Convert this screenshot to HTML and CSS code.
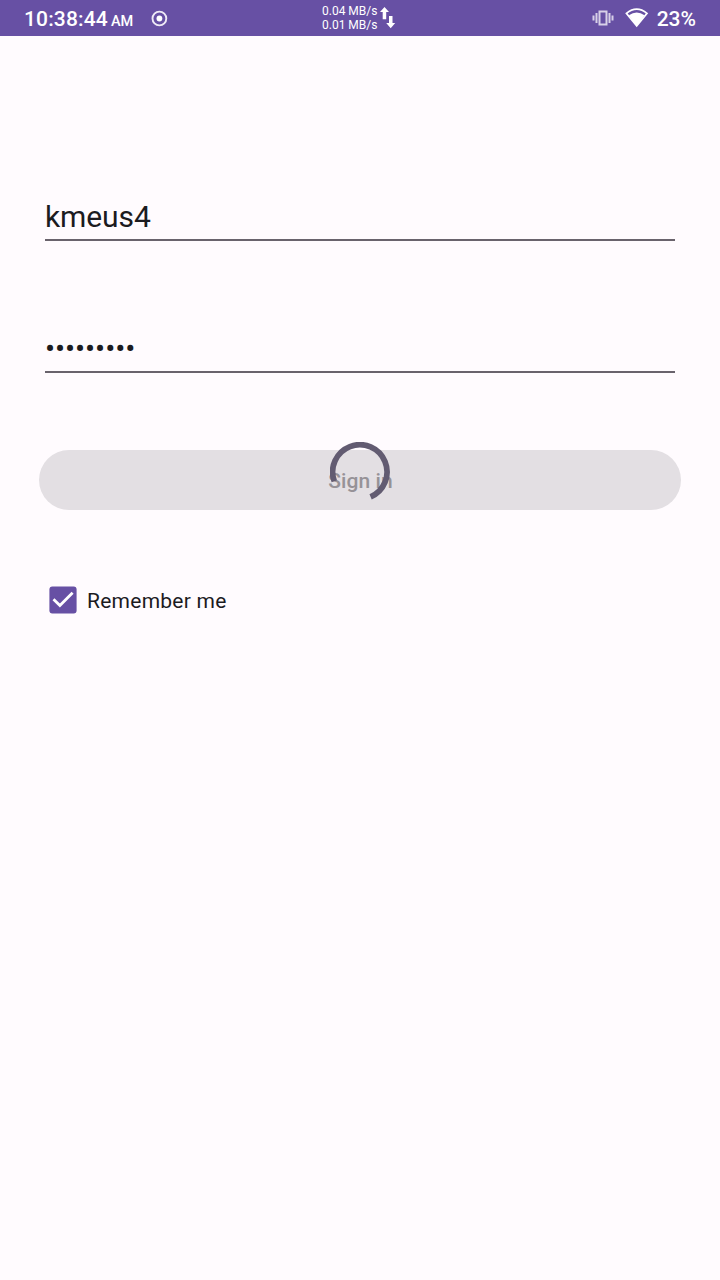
FILE: index.html
```html
<!DOCTYPE html>
<html lang="en">
<head>
<meta charset="utf-8">
<title>Sign in</title>
<link rel="stylesheet" href="styles.css">
</head>
<body>
<header class="status">
  <div class="status-left">
    <span class="clock">10:38:44</span><span class="ampm">AM</span>
    <svg class="record" width="17" height="17" viewBox="0 0 17 17"><circle cx="8.400" cy="8.500" r="6.900" fill="none" stroke="#efeaf6" stroke-width="1.900"/><circle cx="8.400" cy="8.500" r="2.900" fill="#fff"/></svg>
  </div>
  <div class="network">
    <div class="rates"><span>0.04 MB/s</span><span>0.01 MB/s</span></div>
    <svg width="16" height="22" viewBox="0 0 16 22" fill="#fff"><path d="M4.500 0l4.500 5H6.200v7.300H2.700V5H0zM10.700 21.300L6.200 16H9V9h3.500v7h2.700z"/></svg>
  </div>
  <div class="status-right">
    <svg class="vibrate" width="22" height="16" viewBox="0 0 22 16" fill="none" stroke="#d8d0e8" stroke-width="2"><path d="M7.500 1.500h7v13h-7zM4.500 3v10M1.500 5.500v5M17.500 3v10M20.500 5.500v5"/></svg>
    <svg class="wifi" width="24" height="20" viewBox="0 0 24 20"><path d="M1.400 5.300Q11.700-3.100 22 5.300L11.700 17.900z" fill="none" stroke="#fff" stroke-width="1.700"/><path d="M3.900 7.300Q11.700 1.500 19.500 7.300L11.700 18.200z" fill="#fff"/></svg>
    <span class="battery">23%</span>
  </div>
</header>
<main class="login">
  <div class="field username">kmeus4</div>
  <div class="field password">•••••••••</div>
  <div class="button">Sign in
    <svg class="spinner" width="60" height="60" viewBox="0 0 60 60"><path d="M4.300 39.300A27.200 27.200 0 1 1 40.600 54.900" fill="none" stroke="#625b71" stroke-width="5.700"/></svg>
  </div>
  <div class="remember">
    <svg width="28" height="28" viewBox="0 0 28 28"><rect x=".4" y=".4" width="27.200" height="27.200" rx="3" fill="#6750a4"/><path d="M4.500 13.200l6.400 6.300L23.600 6.700" fill="none" stroke="#fff" stroke-width="2.800"/></svg>
    <span>Remember me</span>
  </div>
</main>
</body>
</html>
```
FILE: styles.css
```css
* { box-sizing: border-box; }
body { margin: 0; min-height: 1280px; background: #fffbfe; color: #1c1b1f; font-family: Roboto, sans-serif; }
svg { display: block; flex: none; }
.status { height: 36px; padding: 0 24px; background: #6750a4; color: #fff; display: grid; grid-template-columns: 298px 1fr auto; grid-template-rows: 36px; align-items: start; }
.status-left { display: flex; align-items: baseline; line-height: 36px; padding-top: 1px; white-space: nowrap; }
.clock { font-size: 21px; font-weight: 500; letter-spacing: .15px; }
.ampm { font-size: 14.5px; font-weight: 500; margin-left: 3px; }
.record { align-self: flex-start; margin: 9px 0 0 18px; }
.network { display: flex; gap: 3px; align-items: center; padding-top: 4px; }
.rates { display: flex; flex-direction: column; font-size: 12px; line-height: 14px; }
.network svg { margin-top: -1px; }
.status-right { display: flex; align-items: flex-start; }
.vibrate { margin-top: 10px; }
.wifi { margin: 8px 8px 0 11px; }
.battery { font-size: 21px; font-weight: 500; line-height: 36px; padding-top: 1px; }
.login { padding: 0 39px; }
.field { margin: 0 6px; border-bottom: 2px solid #69636c; font-size: 30px; line-height: 36px; letter-spacing: -.1px; }
.username { margin-top: 163px; height: 42px; }
.password { margin-top: 90px; height: 42px; }
.button { position: relative; margin-top: 77px; height: 60px; padding-left: 1px; border-radius: 30px; background: #e3dfe3; color: #969297; font-size: 21px; font-weight: 500; letter-spacing: .1px; line-height: 62px; text-align: center; }
.spinner { position: absolute; left: 291px; top: -8px; }
.remember { display: flex; align-items: center; gap: 10px; margin: 76px 0 0 10px; height: 28px; font-size: 21px; line-height: 30px; letter-spacing: .25px; }
.remember span { padding-top: 2px; }
```
